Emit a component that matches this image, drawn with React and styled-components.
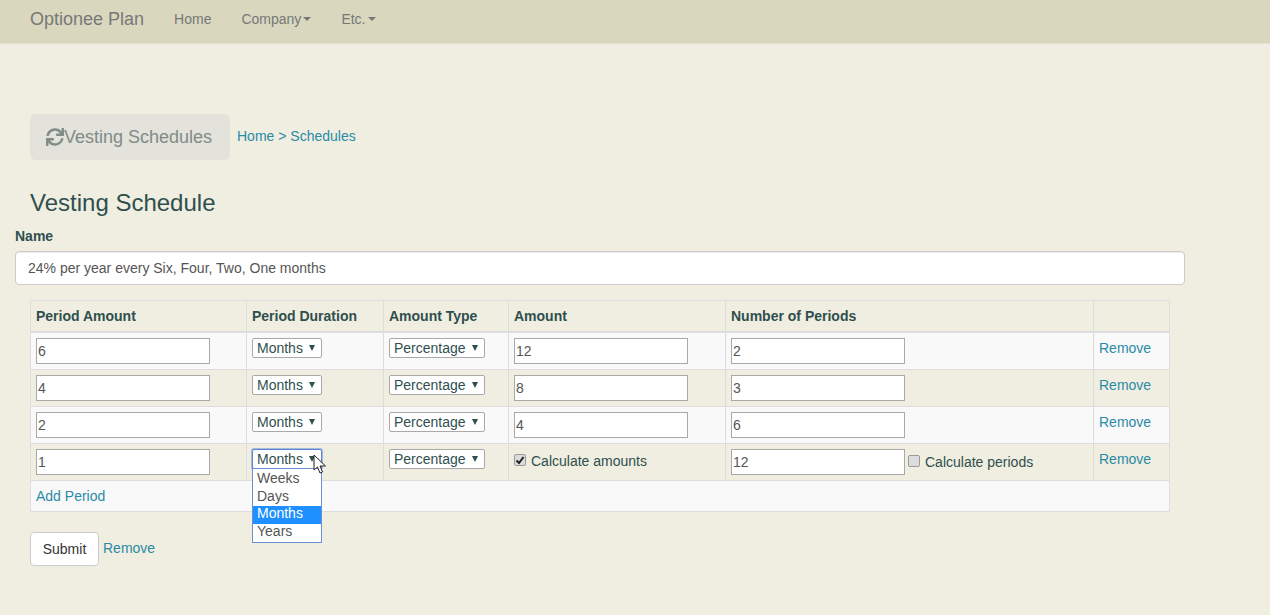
import styled, { createGlobalStyle } from "styled-components";
import { FaSync } from "react-icons/fa";

const GlobalStyle = createGlobalStyle`
    * { box-sizing: border-box; }
    body {
        margin: 0;
        background: #f0eee0;
        color: #2f4f4f;
        font-family: "Liberation Sans", Arial, sans-serif;
        font-size: 14px;
        line-height: 20px;
    }
`;

const Navbar = styled.nav`
    height: 44px;
    display: flex;
    align-items: center;
    padding: 0 0 6px 30px;
    background: #d9d8bf;
    border-bottom: 1px solid #e3e2d0;
`;

const Brand = styled.a`
    font-size: 18px;
    color: #777;
    margin-right: 30px;
`;

const NavItem = styled.a`
    color: #777;
    margin-right: 30px;
    display: flex;
    align-items: center;
`;

const Caret = styled.span`
    width: 0;
    height: 0;
    margin-left: 2px;
    border-top: 4px solid #777;
    border-left: 4px solid transparent;
    border-right: 4px solid transparent;
`;

const Page = styled.main`
    padding: 70px 85px 0 15px;
`;

const TitleRow = styled.div`
    display: flex;
    align-items: center;
    gap: 7px;
    padding-left: 15px;
`;

const Jumbo = styled.div`
    width: 200px;
    height: 46px;
    display: flex;
    align-items: center;
    padding-left: 16px;
    border-radius: 6px;
    background: #e3e2db;
    color: #7f8c88;
    font-size: 18px;
    svg {
        margin-top: -1px;
    }
`;

const Crumbs = styled.div`
    margin-top: -2px;
    color: #2a8ba6;
`;

const Link = styled.a`
    color: #2a8ba6;
`;

const Heading = styled.h2`
    margin: 28px 0 0 15px;
    font-size: 24px;
    font-weight: 400;
    line-height: 30px;
    color: #2f4f4f;
`;

const Label = styled.label`
    display: block;
    margin-top: 8px;
    font-weight: 700;
`;

const NameInput = styled.input`
    display: block;
    width: 1170px;
    height: 34px;
    margin-top: 5px;
    padding: 6px 12px;
    border: 1px solid #ccc;
    border-radius: 4px;
    background: #fff;
    color: #555;
    font: inherit;
    box-shadow: inset 0 1px 1px rgba(0, 0, 0, 0.075);
`;

const Table = styled.table`
    width: 1139px;
    margin: 15px 0 0 15px;
    border-collapse: collapse;
    table-layout: fixed;
`;

const Th = styled.th`
    height: 31px;
    padding: 5px;
    text-align: left;
    border: 1px solid #ddd;
    border-bottom-width: 2px;
`;

const Row = styled.tr`
    background: ${(p) => (p.$striped ? "#f9f9f9" : "transparent")};
`;

const Td = styled.td`
    height: 37px;
    padding: 5px;
    vertical-align: top;
    border: 1px solid #ddd;
`;

const FootCell = styled(Td)`
    height: 31px;
`;

const NumInput = styled.input`
    display: inline-block;
    width: 174px;
    height: 26px;
    padding: 1px;
    vertical-align: top;
    border: 1px solid #a9a9a9;
    background: #fff;
    color: #555;
    font: inherit;
`;

const Select = styled.div`
    position: relative;
    display: inline-flex;
    align-items: center;
    justify-content: space-between;
    height: 20px;
    padding: 0 4px;
    border: 1px solid ${(p) => (p.$open ? "#5b86d6" : "#a9a9a9")};
    border-radius: 2px;
    background: #fff;
    width: ${(p) => p.$width}px;
    box-shadow: ${(p) => (p.$open ? "0 0 0 1px rgba(91, 134, 214, 0.5)" : "none")};
`;

const Arrow = styled.span`
    width: 0;
    height: 0;
    border-top: 6px solid #2f4f4f;
    border-left: 3.5px solid transparent;
    border-right: 3.5px solid transparent;
    margin-right: 2px;
`;

const Menu = styled.ul`
    position: absolute;
    left: -1px;
    top: 18px;
    z-index: 2;
    width: 70px;
    margin: 0;
    padding: 2px 0 1px;
    list-style: none;
    background: #fff;
    border: 1px solid #6b8fd4;
`;

const Option = styled.li`
    height: 17.5px;
    line-height: 15px;
    padding-left: 4px;
    color: ${(p) => (p.$active ? "#fff" : "#555")};
    background: ${(p) => (p.$active ? "#1e90ff" : "transparent")};
`;

const Cursor = styled.svg`
    position: absolute;
    left: 60px;
    top: 4px;
    z-index: 3;
`;

const CheckLabel = styled.label`
    display: inline-flex;
    align-items: flex-start;
    gap: 5px;
    vertical-align: top;
    margin-top: 2px;
`;

const Check = styled.span`
    width: 12px;
    height: 12px;
    margin-top: 3px;
    display: flex;
    align-items: center;
    justify-content: center;
    border: 1px solid #9a9a9a;
    border-radius: 2px;
    background: #dcdcdc;
`;

const SideLabel = styled(CheckLabel)`
    margin: 3px 0 0 3px;
`;

const Actions = styled.div`
    display: flex;
    align-items: center;
    gap: 4px;
    margin: 20px 0 0 15px;
`;

const SubmitBtn = styled.button`
    width: 69px;
    height: 34px;
    padding: 0;
    border: 1px solid #ccc;
    border-radius: 4px;
    background: #fff;
    color: #333;
    font: inherit;
`;

const ActionLink = styled(Link)`
    margin-bottom: 2px;
`;

const rows = [
    { period: "6", amount: "12", count: "2" },
    { period: "4", amount: "8", count: "3" },
    { period: "2", amount: "4", count: "6" },
];

function App() {
    return (
        <>
            <GlobalStyle />
            <Navbar>
                <Brand>Optionee Plan</Brand>
                <NavItem>Home</NavItem>
                <NavItem>Company<Caret /></NavItem>
                <NavItem>Etc.<Caret /></NavItem>
            </Navbar>
            <Page>
                <TitleRow>
                    <Jumbo><FaSync size={18} />Vesting Schedules</Jumbo>
                    <Crumbs><Link>Home</Link> &gt; <Link>Schedules</Link></Crumbs>
                </TitleRow>
                <Heading>Vesting Schedule</Heading>
                <Label>Name</Label>
                <NameInput defaultValue="24% per year every Six, Four, Two, One months" />
                <Table>
                    <colgroup>
                        <col style={{ width: 216 }} />
                        <col style={{ width: 137 }} />
                        <col style={{ width: 125 }} />
                        <col style={{ width: 217 }} />
                        <col style={{ width: 368 }} />
                        <col style={{ width: 76 }} />
                    </colgroup>
                    <thead>
                        <tr>
                            <Th>Period Amount</Th>
                            <Th>Period Duration</Th>
                            <Th>Amount Type</Th>
                            <Th>Amount</Th>
                            <Th>Number of Periods</Th>
                            <Th />
                        </tr>
                    </thead>
                    <tbody>
                        {rows.map((r, i) => (
                            <Row key={r.period} $striped={i % 2 === 0}>
                                <Td><NumInput defaultValue={r.period} /></Td>
                                <Td><Select $width={70}>Months<Arrow /></Select></Td>
                                <Td><Select $width={96}>Percentage<Arrow /></Select></Td>
                                <Td><NumInput defaultValue={r.amount} /></Td>
                                <Td><NumInput defaultValue={r.count} /></Td>
                                <Td><Link>Remove</Link></Td>
                            </Row>
                        ))}
                        <Row>
                            <Td><NumInput defaultValue="1" /></Td>
                            <Td>
                                <Select $width={70} $open>
                                    Months<Arrow />
                                    <Menu>
                                        <Option>Weeks</Option>
                                        <Option>Days</Option>
                                        <Option $active>Months</Option>
                                        <Option>Years</Option>
                                    </Menu>
                                    <Cursor width="14" height="20" viewBox="0 0 14 20">
                                        <path d="M1 1 L1 16 L4.5 13 L7 19 L9.5 18 L7 12 L12.5 12 Z" fill="#fff" stroke="#222" strokeWidth="1" />
                                    </Cursor>
                                </Select>
                            </Td>
                            <Td><Select $width={96}>Percentage<Arrow /></Select></Td>
                            <Td>
                                <CheckLabel>
                                    <Check>
                                        <svg width="10" height="10" viewBox="0 0 10 10">
                                            <path d="M1.5 5.5 L4 8 L8.5 2" fill="none" stroke="#222" strokeWidth="2" />
                                        </svg>
                                    </Check>
                                    Calculate amounts
                                </CheckLabel>
                            </Td>
                            <Td>
                                <NumInput defaultValue="12" />
                                <SideLabel><Check />Calculate periods</SideLabel>
                            </Td>
                            <Td><Link>Remove</Link></Td>
                        </Row>
                        <Row $striped>
                            <FootCell colSpan={6}><Link>Add Period</Link></FootCell>
                        </Row>
                    </tbody>
                </Table>
                <Actions>
                    <SubmitBtn>Submit</SubmitBtn>
                    <ActionLink>Remove</ActionLink>
                </Actions>
            </Page>
        </>
    );
}

export default App;
